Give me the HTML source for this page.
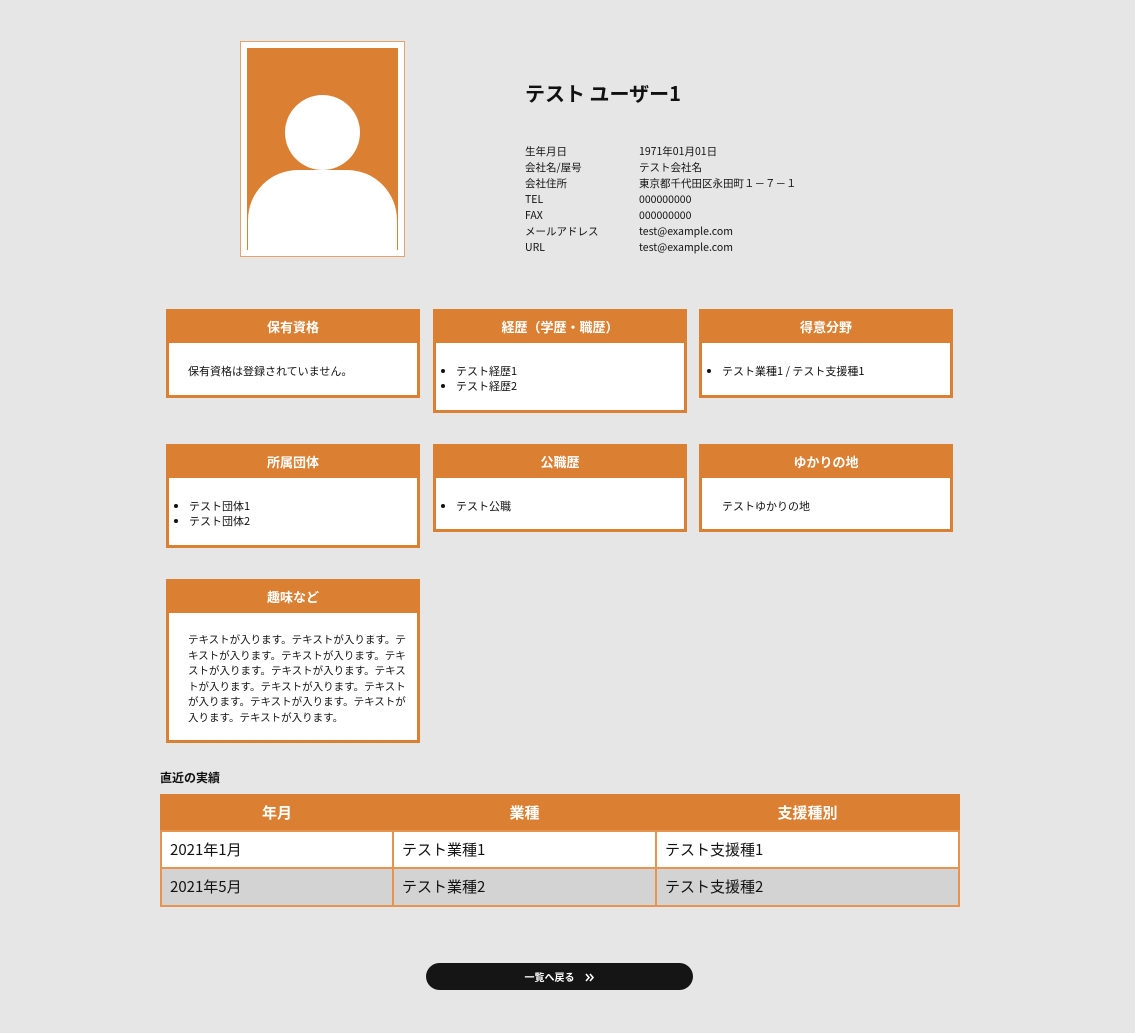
<!DOCTYPE html>
<html><head><meta charset="utf-8">
<style>
*{margin:0;padding:0;box-sizing:border-box}
body{width:1135px;height:1033px;background:#e6e6e6;font-family:"Noto Sans CJK JP","Liberation Sans",sans-serif;color:#111;position:relative;overflow:hidden}
.abs{position:absolute}
.photo{left:240px;top:41px;width:165px;height:216px;border:1px solid #e5a36b;background:#fff}
.photo .bg{position:absolute;left:6px;top:6px;width:151px;height:202px;background:#db7f33;overflow:hidden}
.photo .head{position:absolute;left:38px;top:47px;width:75px;height:75px;border-radius:50%;background:#fff}
.photo .body{position:absolute;left:1px;top:122px;width:149px;height:100px;border-radius:50px 50px 0 0;background:#fff}
.name{left:525px;top:78px;font-size:20px;font-weight:bold;line-height:30px}
.info{left:525px;top:144px;font-size:10.5px;line-height:16px}
.info div{height:16px;white-space:nowrap}
.info span{display:inline-block;width:114px}
.box{border:3px solid #db7f33;background:#fff;width:254px}
.box h3{background:#db7f33;color:#fff;font-size:13px;text-align:center;height:32px;line-height:32px;margin:-1px -1px 0}
.box .c{font-size:11px;line-height:15px}
.box ul{padding:21px 0 0 20px}
.box p{padding:21px 0 0 19px}
.tbl{left:160px;top:794px;width:800px;border-collapse:collapse;background:#db7f33}
.tbl td{line-height:20px}
.lbl{left:160px;top:769px;font-size:12px;font-weight:bold;line-height:18px}
.btn{left:426px;top:963px;width:267px;height:27px;border-radius:14px;background:#151515;color:#fff;font-size:10px;font-weight:bold;text-align:center;line-height:27px}
</style></head><body>
<div class="abs photo"><div class="bg"><div class="head"></div><div class="body"></div></div></div>
<div class="abs name">テスト ユーザー1</div>
<div class="abs info">
<div><span>生年月日</span>1971年01月01日</div>
<div><span>会社名/屋号</span>テスト会社名</div>
<div><span>会社住所</span>東京都千代田区永田町１－７－１</div>
<div><span>TEL</span>000000000</div>
<div><span>FAX</span>000000000</div>
<div><span>メールアドレス</span>test@example.com</div>
<div><span>URL</span>test@example.com</div>
</div>

<div class="abs box" style="left:166px;top:309px;height:89px"><h3>保有資格</h3><div class="c"><p>保有資格は登録されていません。</p></div></div>
<div class="abs box" style="left:433px;top:309px;height:104px"><h3>経歴（学歴・職歴）</h3><div class="c"><ul><li>テスト経歴1</li><li>テスト経歴2</li></ul></div></div>
<div class="abs box" style="left:699px;top:309px;height:89px"><h3>得意分野</h3><div class="c"><ul><li>テスト業種1 / テスト支援種1</li></ul></div></div>

<div class="abs box" style="left:166px;top:444px;height:104px"><h3>所属団体</h3><div class="c"><ul><li>テスト団体1</li><li>テスト団体2</li></ul></div></div>
<div class="abs box" style="left:433px;top:444px;height:88px"><h3>公職歴</h3><div class="c"><ul><li>テスト公職</li></ul></div></div>
<div class="abs box" style="left:699px;top:444px;height:88px"><h3>ゆかりの地</h3><div class="c"><p style="padding-left:20px">テストゆかりの地</p></div></div>

<div class="abs box" style="left:166px;top:579px;height:164px"><h3>趣味など</h3><div class="c" style="font-size:10.5px;line-height:15.5px"><p style="padding-top:19px;padding-left:19px;white-space:nowrap">テキストが入ります。テキストが入ります。テ<br>キストが入ります。テキストが入ります。テキ<br>ストが入ります。テキストが入ります。テキス<br>トが入ります。テキストが入ります。テキスト<br>が入ります。テキストが入ります。テキストが<br>入ります。テキストが入ります。</p></div></div>

<div class="abs lbl">直近の実績</div>
<table class="abs tbl">
<tr style="height:37px;color:#fff;font-size:15px;font-weight:bold"><th style="width:232px">年月</th><th style="width:263px">業種</th><th>支援種別</th></tr>
<tr style="height:37px;font-size:15px"><td style="background:#fff;border:2px solid #e8944f;padding-left:8px">2021年1月</td><td style="background:#fff;border:2px solid #e8944f;padding-left:8px">テスト業種1</td><td style="background:#fff;border:2px solid #e8944f;padding-left:8px">テスト支援種1</td></tr>
<tr style="height:38px;font-size:15px"><td style="background:#d3d3d3;border:2px solid #e8944f;padding-left:8px">2021年5月</td><td style="background:#d3d3d3;border:2px solid #e8944f;padding-left:8px">テスト業種2</td><td style="background:#d3d3d3;border:2px solid #e8944f;padding-left:8px">テスト支援種2</td></tr>
</table>

<div class="abs btn">一覧へ戻る　<svg width="10" height="9" viewBox="0 0 10 9" style="vertical-align:-1px"><path d="M1 1l3 3.5L1 8M5 1l3 3.5L5 8" fill="none" stroke="#fff" stroke-width="1.6"/></svg></div>
</body></html>
